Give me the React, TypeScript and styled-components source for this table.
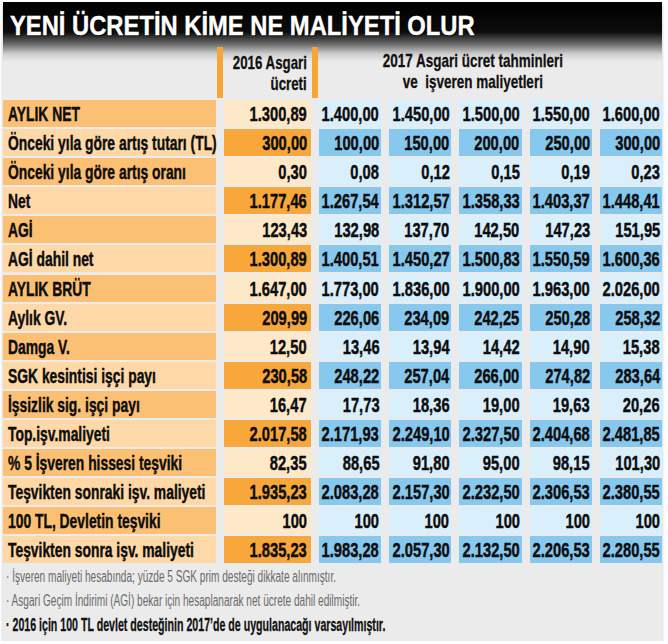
import { Fragment } from "react";
import styled, { createGlobalStyle } from "styled-components";

const GlobalStyle = createGlobalStyle`
  body {
    margin: 0;
    background: #fff;
    font-family: "Liberation Sans", Arial, sans-serif;
    color: #111;
  }
`;

type Row = { label: string; base: string; values: string[] };

const rows: Row[] = [
  { label: "AYLIK NET", base: "1.300,89", values: ["1.400,00", "1.450,00", "1.500,00", "1.550,00", "1.600,00"] },
  { label: "Önceki yıla göre artış tutarı (TL)", base: "300,00", values: ["100,00", "150,00", "200,00", "250,00", "300,00"] },
  { label: "Önceki yıla göre artış oranı", base: "0,30", values: ["0,08", "0,12", "0,15", "0,19", "0,23"] },
  { label: "Net", base: "1.177,46", values: ["1.267,54", "1.312,57", "1.358,33", "1.403,37", "1.448,41"] },
  { label: "AGİ", base: "123,43", values: ["132,98", "137,70", "142,50", "147,23", "151,95"] },
  { label: "AGİ dahil net", base: "1.300,89", values: ["1.400,51", "1.450,27", "1.500,83", "1.550,59", "1.600,36"] },
  { label: "AYLIK BRÜT", base: "1.647,00", values: ["1.773,00", "1.836,00", "1.900,00", "1.963,00", "2.026,00"] },
  { label: "Aylık GV.", base: "209,99", values: ["226,06", "234,09", "242,25", "250,28", "258,32"] },
  { label: "Damga V.", base: "12,50", values: ["13,46", "13,94", "14,42", "14,90", "15,38"] },
  { label: "SGK kesintisi işçi payı", base: "230,58", values: ["248,22", "257,04", "266,00", "274,82", "283,64"] },
  { label: "İşsizlik sig. işçi payı", base: "16,47", values: ["17,73", "18,36", "19,00", "19,63", "20,26"] },
  { label: "Top.işv.maliyeti", base: "2.017,58", values: ["2.171,93", "2.249,10", "2.327,50", "2.404,68", "2.481,85"] },
  { label: "% 5 İşveren hissesi teşviki", base: "82,35", values: ["88,65", "91,80", "95,00", "98,15", "101,30"] },
  { label: "Teşvikten sonraki işv. maliyeti", base: "1.935,23", values: ["2.083,28", "2.157,30", "2.232,50", "2.306,53", "2.380,55"] },
  { label: "100 TL, Devletin teşviki", base: "100", values: ["100", "100", "100", "100", "100"] },
  { label: "Teşvikten sonra işv. maliyeti", base: "1.835,23", values: ["1.983,28", "2.057,30", "2.132,50", "2.206,53", "2.280,55"] },
];

const notes = [
  "· İşveren maliyeti hesabında; yüzde 5 SGK prim desteği dikkate alınmıştır.",
  "· Asgari Geçim İndirimi (AGİ) bekar için hesaplanarak net ücrete dahil edilmiştir.",
];

export default function App() {
  return (
    <>
      <GlobalStyle />
      <Panel>
        <Title>
          <Squeeze $k={0.88} $origin="left">YENİ ÜCRETİN KİME NE MALİYETİ OLUR</Squeeze>
        </Title>

        <Header>
          <span />
          <Bar />
          <BaseHead>
            <Squeeze $k={0.7} $origin="right">2016 Asgari</Squeeze>
            <Squeeze $k={0.7} $origin="right">ücreti</Squeeze>
          </BaseHead>
          <Bar />
          <ForecastHead>
            <Squeeze $k={0.71} $origin="center">2017 Asgari ücret tahminleri</Squeeze>
            <Squeeze $k={0.71} $origin="center">ve&nbsp; işveren maliyetleri</Squeeze>
          </ForecastHead>
        </Header>

        <Table>
          {rows.map((row, i) => {
            const strong = i % 2 === 1;
            return (
              <Fragment key={row.label}>
                <LabelCell $strong={!strong}>
                  <Squeeze $k={0.66} $origin="left">{row.label}</Squeeze>
                </LabelCell>
                <BaseCell $strong={strong}>
                  <Squeeze $k={0.7} $origin="right">{row.base}</Squeeze>
                </BaseCell>
                {row.values.map((v, j) => (
                  <ForecastCell key={j} $strong={strong}>
                    <Squeeze $k={0.7} $origin="right">{v}</Squeeze>
                  </ForecastCell>
                ))}
              </Fragment>
            );
          })}
        </Table>

        <Notes>
          {notes.map(n => (
            <Note key={n}>
              <Squeeze $k={0.63} $origin="left">{n}</Squeeze>
            </Note>
          ))}
          <Note $bold>
            <Squeeze $k={0.59} $origin="left">
              · 2016 için 100 TL devlet desteğinin 2017’de de uygulanacağı varsayılmıştır.
            </Squeeze>
          </Note>
        </Notes>
      </Panel>
    </>
  );
}

const Panel = styled.div`
  width: 659px;
  margin: 2px 0 0 3px;
  background: linear-gradient(
    to bottom,
    #000 0px,
    #0c0c0c 30px,
    #6a6a6a 42px,
    #cfcfcf 52px,
    #ebebeb 60px,
    #ebebeb 100%
  );
  box-shadow: 0 2px 3px rgba(0, 0, 0, 0.25);
  overflow: hidden;
`;

const Squeeze = styled.span<{ $k: number; $origin: "left" | "right" | "center" }>`
  display: inline-block;
  flex-shrink: 0;
  white-space: nowrap;
  transform: scaleX(${p => p.$k});
  transform-origin: ${p => p.$origin} center;
`;

const Title = styled.h1`
  margin: 0;
  height: 45px;
  box-sizing: border-box;
  padding: 11px 0 0 7px;
  font-size: 27px;
  line-height: 27px;
  font-weight: 700;
  color: #fff;
  -webkit-text-stroke: 0.4px #fff;
  text-shadow: 0 0 2px #000, 1px 1px 1px #000;
`;

const Header = styled.div`
  display: grid;
  grid-template-columns: 214px 6px 89px 6px minmax(0, 1fr);
  height: 51px;
  margin-bottom: 2px;
  font-size: 19px;
  font-weight: 700;
  line-height: 21px;
  -webkit-text-stroke: 0.3px #111;
`;

const Bar = styled.div`
  background: #f7a536;
`;

const BaseHead = styled.div`
  display: flex;
  flex-direction: column;
  align-items: flex-end;
  padding: 5px 5px 0 0;
`;

const ForecastHead = styled.div`
  display: flex;
  flex-direction: column;
  align-items: center;
  padding: 3px 34px 0 0;
`;

const Table = styled.div`
  display: grid;
  grid-template-columns: 213px 87px repeat(5, minmax(0, 1fr));
  grid-auto-rows: 27px;
  column-gap: 8px;
  row-gap: 2.1px;
  font-size: 21px;
  font-weight: 700;
  line-height: 27px;
  color: #0d0d0d;
  -webkit-text-stroke: 0.45px #0d0d0d;
`;

const LabelCell = styled.div<{ $strong: boolean }>`
  display: flex;
  background: ${p => (p.$strong ? "#fcc074" : "#fed8a6")};
  padding-left: 5px;
`;

const BaseCell = styled.div<{ $strong: boolean }>`
  display: flex;
  justify-content: flex-end;
  background: ${p => (p.$strong ? "#f8a73a" : "#fde9c8")};
  padding-right: 4px;
`;

const ForecastCell = styled.div<{ $strong: boolean }>`
  display: flex;
  justify-content: flex-end;
  min-width: 0;
  background: ${p => (p.$strong ? "#87c8ef" : "#daeffc")};
  padding-right: 2px;
`;

const Notes = styled.div`
  padding: 2px 0 4px 3px;
`;

const Note = styled.div<{ $bold?: boolean }>`
  display: flex;
  font-size: ${p => (p.$bold ? "18px" : "16px")};
  line-height: 24px;
  font-weight: ${p => (p.$bold ? 700 : 400)};
  color: ${p => (p.$bold ? "#111" : "#6a6a6a")};
  -webkit-text-stroke: ${p => (p.$bold ? "0.3px #111" : "0")};
`;
